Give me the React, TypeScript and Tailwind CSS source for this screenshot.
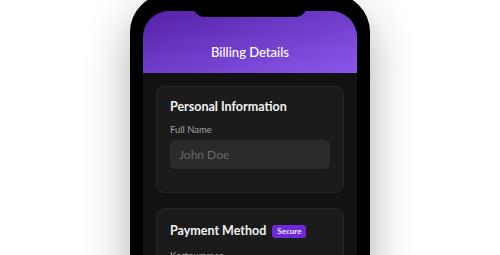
import React from 'react';

const font = { fontFamily: 'Lato, "Noto Sans", sans-serif' };

function Section({
  title,
  badge,
  children,
}: {
  title: string;
  badge?: string;
  children: React.ReactNode;
}) {
  return (
    <div className="rounded-lg border border-[#262626] bg-[#1b1b1b] px-[13px] pt-[11px] pb-[23px]">
      <div
        className={
          badge
            ? 'flex min-h-[22px] items-center gap-[6px]'
            : 'flex items-center gap-[6px]'
        }
      >
        <h2 className="text-[12.5px] leading-[18px] font-bold text-[#f2f2f2]">
          {title}
        </h2>
        {badge && (
          <span className="rounded-[3px] bg-[#6d28d9] px-[5px] text-[8px] leading-[13px] font-bold text-[#ede9fe]">
            {badge}
          </span>
        )}
      </div>
      <div className="mt-[7px] flex flex-col gap-[3px]">{children}</div>
    </div>
  );
}

function Field({ label, placeholder }: { label: string; placeholder: string }) {
  return (
    <>
      <label className="text-[9.5px] leading-[14px] text-[#a3a3a3]">
        {label}
      </label>
      <input
        placeholder={placeholder}
        className="h-[29px] w-full rounded-[5px] border border-[#2c2c2c] bg-[#2a2a2a] px-[8px] text-[12px] text-white outline-none placeholder:text-[#6b6b6b]"
        style={font}
      />
    </>
  );
}

export default function App() {
  return (
    <div
      className="flex h-screen justify-center overflow-hidden bg-white"
      style={font}
    >
      <div className="relative -mt-[6px] h-[520px] w-[240px] shrink-0 rounded-[38px] bg-black px-[13px] pt-[17px] pb-[13px] shadow-[0_18px_45px_rgba(0,0,0,0.32)]">
        <div className="absolute top-0 left-1/2 z-10 h-[23px] w-[114px] -translate-x-1/2 rounded-b-[12px] bg-black" />
        <div className="flex h-full flex-col overflow-hidden rounded-[26px] bg-[#121212]">
          <header className="flex h-[62px] shrink-0 items-end justify-center bg-linear-to-br from-[#5421a6] to-[#8b57ec] pb-[11px]">
            <h1 className="text-[13px] leading-[20px] font-medium text-white">
              Billing Details
            </h1>
          </header>
          <main className="flex flex-col gap-[15px] px-[13px] pt-[13px]">
            <Section title="Personal Information">
              <Field label="Full Name" placeholder="John Doe" />
            </Section>
            <Section title="Payment Method" badge="Secure">
              <Field label="Kortnummer" placeholder="1234 5678 9012 3456" />
            </Section>
          </main>
        </div>
      </div>
    </div>
  );
}
